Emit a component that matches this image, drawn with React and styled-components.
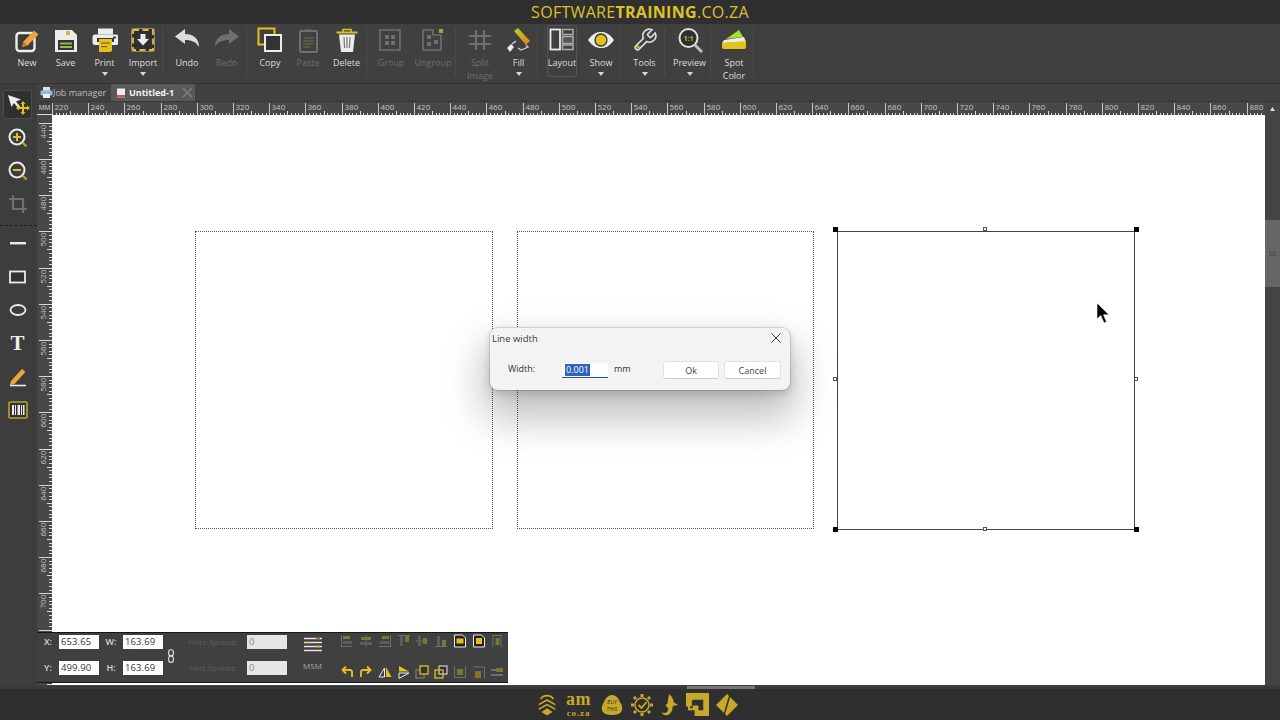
import React from 'react';
import styled, { createGlobalStyle } from 'styled-components';

const Global = createGlobalStyle`
  html, body { margin: 0; padding: 0; background: #2f2f2f; overflow: hidden; }
  * { box-sizing: border-box; }
`;

const Page = styled.div`
  width: 1280px; height: 720px; display: flex; flex-direction: column;
  font-family: "Open Sans", "Noto Sans", sans-serif; background: #2f2f2f; overflow: hidden;
`;
const TitleBar = styled.header`
  height: 24px; flex: none; background: #2f2f2f; display: flex; align-items: center; justify-content: center;
  color: #dcc22a; font-size: 16px; line-height: 24px; letter-spacing: .3px;
  b { font-weight: 700; }
`;
const Ribbon = styled.nav`
  height: 59px; flex: none; background: #404040; display: flex; padding-left: 8px; align-items: stretch;
`;
const RibbonItem = styled.div`
  width: ${p => p.$w}px; flex: none; display: flex; flex-direction: column; align-items: center;
  margin-left: ${p => p.$ml || 0}px;
  border: ${p => (p.$boxed ? '1px solid #565656' : 'none')};
  border-radius: 3px;
  height: ${p => (p.$boxed ? '52px' : 'auto')};
  padding-top: ${p => (p.$boxed ? '1px' : '3px')};
  margin-top: ${p => (p.$boxed ? '1px' : '0')};
`;
const RibbonIcon = styled.div`
  width: 28px; height: 26px; display: flex; align-items: center; justify-content: center;
`;
const RibbonLabel = styled.span`
  margin-top: 3px; font-size: 9px; line-height: 13px; text-align: center; white-space: pre-line;
  color: ${p => (p.$off ? '#6e6e6e' : '#dedede')};
`;
const Caret = styled.i`
  margin-top: 3px; width: 0; height: 0; display: block;
  border-left: 3.5px solid transparent; border-right: 3.5px solid transparent; border-top: 4px solid #d8d8d8;
`;
const Sep = styled.div`
  width: 5px; flex: none; margin: 3px 0 7px; border-left: 1px solid #4b4b4b;
`;
const Body = styled.div`
  flex: 1; min-height: 0; display: flex; background: #404040;
`;
const LeftBar = styled.aside`
  width: 37px; flex: none; background: #3d3d3d; padding: 3.5px 0 0 3px; border-top: 1px solid #353535;
  display: flex; flex-direction: column;
`;
const ToolButton = styled.div`
  width: 29px; height: 29px; flex: none; margin: 2.2px 0; display: flex; align-items: center; justify-content: center;
  border-radius: 2px;
  background: ${p => (p.$active ? '#303030' : 'transparent')};
  border: 1px solid ${p => (p.$active ? '#4c4c4c' : 'transparent')};
`;
const ToolGlyph = styled.span`
  font: 700 21px "Liberation Serif", serif; color: #ececec;
`;
const ToolDivider = styled.div`
  height: 1px; flex: none; margin: 4px 0 .8px -3px; width: 37px; border-top: 1px dashed #1e1e1e;
`;
const Workspace = styled.main`
  flex: 1; min-width: 0; display: flex; flex-direction: column;
`;
const TabRow = styled.div`
  height: 19px; flex: none; background: #414141; display: flex; align-items: stretch; border-top: 1px solid #353535;
  padding-left: 3px; border-bottom: 1px solid #383838;
`;
const Tab = styled.div`
  display: flex; align-items: center; font-size: 9px;
  width: ${p => p.$w}px; padding-left: ${p => p.$pl || 0}px;
  color: ${p => (p.$active ? '#f4f4f4' : '#bdbdbd')};
  font-weight: ${p => (p.$active ? 700 : 400)};
  background: ${p => (p.$active ? '#595959' : 'transparent')};
`;
const TabDoc = styled.svg`
  margin-right: 3px; flex: none;
`;
const TabClose = styled.svg`
  margin-left: 8px; flex: none;
`;
const RulerRow = styled.div`
  height: 13px; flex: none; display: flex; background: #484848;
`;
const RulerUnit = styled.div`
  width: 15px; flex: none; font-size: 6.5px; line-height: 11px; color: #ddd; text-align: center; border-bottom: 1px solid #ddd;
  height: 13px; background: #3f3f3f;
`;
const HRulerSvg = styled.svg`
  display: block; flex: none;
  text { font: 8px "Open Sans", sans-serif; fill: #c4c4c4; }
`;
const RulerEnd = styled.div`
  width: 15px; flex: none; background: #444; display: flex; align-items: center; justify-content: center;
`;
const StageRow = styled.div`
  flex: 1; min-height: 0; display: flex; position: relative; margin-bottom: 1px;
`;
const VRuler = styled.svg`
  display: block; width: 15px; height: 570px; flex: none; background: #484848;
  text { font: 8px "Open Sans", sans-serif; fill: #c4c4c4; }
`;
const Canvas = styled.div`
  flex: 1; position: relative; background: #fff; overflow: hidden;
`;
const Marquee = styled.div`
  position: absolute; left: ${p => p.$x}px; top: ${p => p.$y}px; width: ${p => p.$w}px; height: ${p => p.$h}px;
  border: 1px ${p => (p.$solid ? 'solid #444' : 'dotted #5a5a5a')};
`;
const Handle = styled.div`
  position: absolute; left: ${p => p.$x - 2}px; top: ${p => p.$y - 2}px; width: ${p => (p.$on ? 5 : 4)}px; height: ${p => (p.$on ? 5 : 4)}px;
  background: ${p => (p.$on ? '#000' : '#fff')}; border: 1px solid ${p => (p.$on ? '#000' : '#555')};
`;
const Pointer = styled.svg`
  position: absolute; left: 1045px; top: 188px;
`;
const Scrollbar = styled.div`
  width: 15px; flex: none; background: #444; padding-top: 105px;
`;
const ScrollThumb = styled.div`
  height: 67px; background: #666; display: flex; flex-direction: column; align-items: center; justify-content: center; gap: 1px;
  i { display: block; width: 7px; height: 1px; background: #4d4d4d; }
`;
const Dialog = styled.div`
  position: absolute; left: 438px; top: 213px; width: 300px; height: 62px; background: #f3f3f3; border-radius: 8px;
  box-shadow: 0 0 0 1px rgba(0,0,0,.12), 0 4px 10px rgba(0,0,0,.16), 0 22px 42px 6px rgba(0,0,0,.26);
  color: #333; font-size: 9px;
  display: flex; flex-direction: column;
`;
const DialogHead = styled.div`
  height: 20px; display: flex; align-items: center; justify-content: space-between; padding: 0 9px 0 2px; font-size: 9.5px; color: #3a3a3a;
`;
const DialogBody = styled.div`
  display: flex; align-items: center; padding-left: 18px; margin-top: 13px; height: 18px;
`;
const DialogLabel = styled.span`
  width: 54px; flex: none; margin-top: -3px;
`;
const WidthInput = styled.div`
  width: 46px; height: 15px; background: #fff; border-bottom: 1px solid #1d4f9c; padding: 1px 0 0 3px; line-height: 12px; flex: none;
  span { background: #2c63bd; color: #fff; display: inline-block; padding: 0 1px; }
`;
const UnitLabel = styled.span`
  margin-left: 6px; width: 49px; flex: none; margin-top: -3px;
`;
const DialogButton = styled.div`
  width: ${p => p.$w}px; height: 18px; background: #fff; border: 1px solid #e2e2e2; border-bottom-color: #ccc; border-radius: 3px;
  display: flex; align-items: center; justify-content: center; margin-left: ${p => p.$ml || 0}px; flex: none; font-size: 9px; color: #444;
`;
const PropPanel = styled.section`
  position: absolute; left: 0; bottom: 2px; width: 471px; height: 51px; background: #404040;
  border-top: 1px solid #161616; border-bottom: 1px solid #161616; display: flex; align-items: flex-start; color: #ddd;
`;
const FieldGrid = styled.div`
  display: grid; grid-template-columns: ${p => p.$cols}; grid-auto-rows: 14px; row-gap: 12px; padding-top: 2px; align-items: center;
  flex: none;
`;
const FieldLabel = styled.span`
  font-size: ${p => (p.$off ? 8 : 9)}px; line-height: 14px; text-align: center; white-space: nowrap;
  color: ${p => (p.$off ? '#5f5f5f' : '#d8d8d8')};
  font-weight: ${p => (p.$off ? 400 : 600)};
`;
const FieldValue = styled.div`
  height: 14px; font-size: 9.5px; line-height: 13px; padding-left: 2px; letter-spacing: .1px;
  background: ${p => (p.$off ? '#e6e6e6' : '#fff')}; color: ${p => (p.$off ? '#8a8a8a' : '#333')};
`;
const ChainWrap = styled.div`
  width: 16px; height: 46px; flex: none; display: flex; align-items: center; justify-content: center;
`;
const MsmBlock = styled.div`
  width: 51px; flex: none; display: flex; flex-direction: column; align-items: center; padding-top: 4px; font-size: 8px; color: #a8a8a8; line-height: 11px;
  svg { margin-bottom: 7px; }
`;
const MiniGrid = styled.div`
  display: grid; grid-template-columns: repeat(9, 18.75px); grid-auto-rows: 14px; row-gap: 17px; padding-top: 1px; justify-items: center; align-items: center; flex: none;
`;
const BottomBar = styled.footer`
  height: 34px; flex: none; background: #2f2f2f; display: flex; flex-direction: column;
`;
const HTrack = styled.div`
  height: 3px; flex: none; background: #3a3a3a; padding-left: 687px;
`;
const HThumb = styled.div`
  width: 68px; height: 3px; background: #777;
`;
const LogoRow = styled.div`
  flex: 1; display: flex; align-items: center; justify-content: center; padding: 0 6px 0 0; gap: 6px; color: #c7a82b;
`;
const AmLogo = styled.div`
  width: 30px; font-family: "Liberation Serif", serif; font-weight: 700; text-align: center; color: #c7a82b;
  font-size: 18px; line-height: 20px; letter-spacing: .4px; margin-top: -3px;
  small { display: block; font-size: 9px; line-height: 9px; letter-spacing: .9px; }
`;

const Y = '#e3c01e';
const W = '#ececec';
const D = '#6f6f6f';

const Svg = ({ s = 26, vb, children }) => (
  <svg width={s} height={s} viewBox={vb || `0 0 ${s} ${s}`} fill="none">{children}</svg>
);

const ribbon = [
  { l: 'New', w: 38, i: <Svg><rect x="2.5" y="6" width="18" height="18" rx="3" stroke={W} strokeWidth="2.4" fill="#3a3a3a" /><path d="M8 20l1.5-5.5L20 3.5l4.5 4L13.5 18.5z" fill="#eea43a" /><path d="M8 20l1.5-5.500 4 4z" fill="#c9792a" /></Svg> },
  { l: 'Save', w: 39, i: <Svg><path d="M2 3h17l5 5v17H2z" fill={W} /><rect x="13" y="4" width="4" height="4" fill="#d6b23a" /><rect x="5" y="13" width="16" height="10" fill="#343434" /><rect x="7" y="15.5" width="12" height="2" fill="#8fbe48" /><rect x="7" y="19" width="12" height="2" fill="#8fbe48" /></Svg> },
  { l: 'Print', w: 39, c: 1, i: <Svg><rect x="6" y="1.5" width="15" height="6" fill={W} /><rect x="0.5" y="7.5" width="26" height="10.5" rx="2.5" fill={W} /><rect x="21" y="9.5" width="3" height="2" fill="#444" /><rect x="5" y="11" width="17" height="4" fill="#343434" /><path d="M7 12h13v12l-2 1H7z" fill={Y} /><rect x="9" y="15.5" width="9" height="1.2" fill="#7a6510" /><rect x="9" y="19" width="6" height="1.2" fill="#7a6510" /></Svg> },
  { l: 'Import', w: 38, c: 1, i: <Svg><rect x="1.5" y="1.5" width="23" height="23" rx="2" fill="#2f2f2f" stroke="#8a8a8a" /><rect x="3" y="3" width="20" height="20" stroke={Y} strokeWidth="1.8" strokeDasharray="6 3.5" /><path d="M10.5 7h5v5h3.5L13 18.5 7 12h3.5z" fill={W} /></Svg> },
  { sep: 1 },
  { l: 'Undo', w: 40, i: <Svg><path d="M1 9.5L11 2v5c8 0 14 4 14 13-3-5-7-7-14-7v4z" fill="#dcdcdc" /></Svg> },
  { l: 'Redo', w: 39, off: 1, i: <Svg><path d="M25 9.5L15 2v5C7 7 1 11 1 20c3-5 7-7 14-7v4z" fill={D} /></Svg> },
  { sep: 1 },
  { l: 'Copy', w: 38, i: <Svg><rect x="1.5" y="1.5" width="16" height="16" stroke={Y} strokeWidth="2" /><rect x="8" y="8" width="16" height="16" fill="#333" stroke={W} strokeWidth="2" /></Svg> },
  { l: 'Paste', w: 38, off: 1, i: <Svg><rect x="5" y="4" width="17" height="21" rx="1" stroke={D} strokeWidth="2" /><path d="M10 5V2.5h3.5V1l1 1.5H17V5z" fill={D} /><path d="M8.5 11h10M8.5 14h10M8.5 17h10M8.5 20h7" stroke="#7c7242" /></Svg> },
  { l: 'Delete', w: 39, i: <Svg><path d="M2.5 5.5h21" stroke={Y} strokeWidth="2" /><path d="M9 5V2.5h8V5" stroke={Y} strokeWidth="1.6" /><path d="M5 7.5h16l-2 17.5H7z" fill={W} /><path d="M10 10l.6 11M13 10v11M16 10l-.6 11" stroke="#777" strokeWidth="1.2" /></Svg> },
  { sep: 1 },
  { l: 'Group', w: 40, off: 1, i: <Svg><rect x="2" y="3" width="20" height="20" stroke={D} strokeWidth="1.6" /><path d="M7 8h4v4H7zM13 8h4v4h-4zM7 14h4v4H7zM13 14h4v4h-4z" fill={D} /></Svg> },
  { l: 'Ungroup', w: 44, off: 1, i: <Svg><path d="M3 3h10v5h8v15H3z" stroke={D} strokeWidth="1.6" /><path d="M7 8h4v4H7zM7 15h4v4H7zM14 13h4v4h-4z" fill={D} /><rect x="19" y="2" width="4" height="4" fill="#a8a33a" /></Svg> },
  { sep: 1 },
  { l: 'Split\nImage', w: 40, off: 1, i: <Svg><path d="M9 3v20M17 3v20M2 9h22M2 17h22" stroke={D} strokeWidth="2.2" /></Svg> },
  { l: 'Fill', w: 37, c: 1, i: <Svg><defs><linearGradient id="rg" x1="0" y1="0" x2="1" y2="1"><stop offset="0" stopColor="#9fdc2c" /><stop offset="1" stopColor="#f07a14" /></linearGradient></defs><path d="M8 4l4-3 12 13-4 4z" fill="url(#rg)" /><path d="M20 18l2 2-7 3-3-2" stroke="#ccc" strokeWidth="1.3" /><path d="M1 21l4-4 3 3-4 5z" fill={W} /><path d="M6 17l4-3" stroke="#ddd" strokeWidth="1.2" /></Svg> },
  { sep: 1 },
  { l: 'Layout', w: 30, ml: 5, boxed: 1, i: <Svg><rect x="1.5" y="2.5" width="9.5" height="20" stroke={W} strokeWidth="1.8" /><rect x="13.5" y="2.5" width="10.5" height="5" stroke="#aaa" strokeWidth="1.5" /><rect x="13.5" y="9.5" width="10.5" height="7" fill="#555" stroke="#aaa" strokeWidth="1.5" /><rect x="13.5" y="18" width="10.5" height="4.5" stroke="#aaa" strokeWidth="1.5" /></Svg> },
  { l: 'Show', w: 38, ml: 5, c: 1, i: <Svg><path d="M0 13C5 6 9 5 13 5s8 1 13 8c-5 7-9 8-13 8s-8-1-13-8z" fill={W} /><circle cx="13" cy="13" r="6" fill={Y} stroke="#333" strokeWidth="1.3" /></Svg> },
  { sep: 1 },
  { l: 'Tools', w: 39, c: 1, i: <svg width="26" height="26" viewBox="0 0 24 24" fill="none"><path d="M14.7 6.3a1 1 0 0 0 0 1.4l1.6 1.6a1 1 0 0 0 1.4 0l3.77-3.77a6 6 0 0 1-7.94 7.94l-6.91 6.91a2.12 2.12 0 0 1-3-3l6.91-6.91a6 6 0 0 1 7.94-7.94l-3.76 3.76z" stroke="#dcdcdc" strokeWidth="1.5" /><circle cx="5.6" cy="18.5" r="1.6" fill="#c9a92a" /></svg> },
  { sep: 1 },
  { l: 'Preview', w: 41, c: 1, i: <Svg><circle cx="11.5" cy="11" r="9" fill="#2f2f2f" stroke="#e2e2e2" strokeWidth="2" /><path d="M18 18l7 7" stroke="#bdbdbd" strokeWidth="3" /><text x="11.5" y="13.5" textAnchor="middle" fontSize="7" fontWeight="700" fill="#c9b03a" fontFamily="Open Sans">1:1</text></Svg> },
  { sep: 1 },
  { l: 'Spot\nColor', w: 38, i: <Svg><path d="M5 12L18 3l4 7z" fill="#a6e02c" /><path d="M1 16l2-3 20-3 2 5z" fill={W} /><path d="M1 16l24-2v6a2 2 0 0 1-2 2H3a2 2 0 0 1-2-2z" fill="#e6c21e" /></Svg> },
  { sep: 1 },
];

const tools = [
  { a: 1, i: <Svg s={24}><path d="M2 3l13 4.500-5 2 5 6-2 1.500-5-6-2.500 4z" fill={W} /><path d="M17 9l2.500 3h-1.500v3h3v-1.500l3 2.500-3 2.500V17h-3v3h1.500L17 23l-2.500-3H16v-3h-3v1.500L10 16l3-2.500V15h3v-3h-1.500z" fill={Y} /></Svg> },
  { i: <Svg s={22}><circle cx="10" cy="10" r="7.500" stroke={W} strokeWidth="2" /><path d="M15.500 15.500l4 4" stroke="#b9a02a" strokeWidth="2.400" /><path d="M6 10h8M10 6v8" stroke={Y} strokeWidth="2" /></Svg> },
  { i: <Svg s={22}><circle cx="10" cy="10" r="7.500" stroke={W} strokeWidth="2" /><path d="M15.500 15.500l4 4" stroke="#b9a02a" strokeWidth="2.400" /><path d="M6 10h8" stroke={Y} strokeWidth="2" /></Svg> },
  { i: <Svg s={22}><path d="M6 2v14h14M2 6h14v14" stroke={D} strokeWidth="2.200" /></Svg> },
  { div: 1 },
  { i: <Svg s={22}><rect x="3" y="10" width="16" height="2.400" fill={W} /></Svg> },
  { i: <Svg s={22}><rect x="3" y="5.500" width="15" height="11" fill="#333" stroke={W} strokeWidth="1.800" /></Svg> },
  { i: <Svg s={22}><ellipse cx="11" cy="11" rx="7.500" ry="5" stroke={W} strokeWidth="1.800" /></Svg> },
  { t: 1 },
  { i: <Svg s={22}><path d="M4 15L15 3l3.500 3L7.500 18l-4.500 1z" fill="#eea43a" /><path d="M3 19.500h16" stroke={W} strokeWidth="1.600" /></Svg> },
  { i: <Svg s={22}><rect x="2" y="3" width="18" height="16" rx="1" fill="#333" stroke="#b9a02a" strokeWidth="1.600" /><path d="M5 6h2v10H5zM8 6h1v10H8zM10.500 6h2.500v10h-2.500zM14 6h1v10h-1zM16 6h1.500v10H16z" fill={W} /></Svg> },
];

const AlignIcon = ({ v }) => {
  const g = '#6f6f6f', o = '#7d7530';
  const map = {
    a: <><path d="M1.500 1v12M1.500 12.500h11" stroke={g} /><rect x="3" y="2" width="7" height="3" fill={o} /><rect x="3" y="7" width="9" height="3" fill="#5c5c5c" /></>,
    b: <><path d="M7 1v12" stroke={g} /><rect x="2" y="3" width="10" height="3" fill={o} /><rect x="1" y="8" width="12" height="3" fill="#5c5c5c" /></>,
    c: <><path d="M12.500 1v12M1 12.500h11" stroke={g} /><rect x="4" y="2" width="7" height="3" fill={o} /><rect x="2" y="7" width="9" height="3" fill="#5c5c5c" /></>,
    d: <><path d="M1 1.500h12" stroke={g} /><rect x="3" y="2" width="3" height="10" fill="#5c5c5c" /><rect x="8" y="2" width="4" height="6" fill={o} /></>,
    e: <><path d="M1 7h12" stroke={g} /><rect x="3" y="2" width="3" height="10" fill="#5c5c5c" /><rect x="8" y="4" width="4" height="6" fill={o} /></>,
    f: <><path d="M1 12.500h12" stroke={g} /><rect x="3" y="2" width="3" height="10" fill="#5c5c5c" /><rect x="8" y="6" width="4" height="6" fill={o} /></>,
    g: <><path d="M1.500 1h8l3 3v9h-11z" fill="#222" stroke={W} /><rect x="3.500" y="4.500" width="7" height="5" fill={Y} /></>,
    h: <><path d="M1.500 1h8l3 3v9h-11z" fill="#222" stroke={W} /><rect x="4" y="4" width="6" height="6" fill={Y} /></>,
    i: <><path d="M2 1.500h10M3 2v11M11 2v11" stroke={g} /><rect x="5.500" y="4" width="4" height="7" fill={o} /></>,
    j: <path d="M12 12V7a2 2 0 0 0-2-2H3M6 1.500L2.500 5 6 8.500" stroke={Y} strokeWidth="1.900" />,
    k: <path d="M2 12V7a2 2 0 0 1 2-2h7M8 1.500L11.500 5 8 8.500" stroke={Y} strokeWidth="1.900" />,
    l: <><path d="M6.500 3v9H1z" stroke={W} /><path d="M8 2l5.500 10H8z" fill={Y} /></>,
    m: <><path d="M2 1l10 5.500H2z" fill={Y} /><path d="M2 8h10L2 13.500z" stroke={W} /></>,
    n: <><rect x="1" y="5" width="8" height="8" stroke="#888" /><rect x="5" y="1" width="8" height="8" fill="#333" stroke={Y} strokeWidth="1.300" /></>,
    o: <><rect x="5" y="1" width="8" height="8" fill="#333" stroke={W} /><rect x="1" y="5" width="8" height="8" fill="none" stroke={Y} strokeWidth="1.300" /></>,
    p: <><path d="M1.500 1v12M12.500 1v12M1 12.500h12" stroke={g} /><rect x="4" y="4" width="6" height="6" fill={o} /></>,
    q: <><path d="M1.500 2h11M12.500 2v11" stroke={g} /><rect x="3" y="6" width="6" height="7" fill={o} /></>,
    r: <><path d="M1 5h5M1 10h12" stroke={g} strokeWidth="2" /><rect x="6" y="3" width="7" height="4" fill={o} /></>,
  };
  return <svg width="14" height="14" viewBox="0 0 14 14" fill="none">{map[v]}</svg>;
};

const STEP = 36.2;
const HRuler = () => {
  const marks = [];
  for (let i = 0; i * STEP / 10 < 1213; i++) {
    const x = Math.round(i * STEP / 10) + 0.5;
    if (i % 10 === 0) continue;
    const len = i % 5 === 0 ? 4 : 2;
    marks.push(<path key={i} d={`M${x} ${13 - len}V13`} stroke="#d8d8d8" strokeWidth="1" />);
  }
  const labels = [];
  for (let n = 0; n <= 33; n++) {
    const x = Math.round(n * STEP) + 0.5;
    labels.push(<path key={'m' + n} d={`M${x} 1V13`} stroke="#c8c8c8" />);
    labels.push(<text key={'t' + n} x={x + 2} y="8">{220 + n * 20}</text>);
  }
  return <HRulerSvg width="1213" height="13" viewBox="0 0 1213 13">{marks}{labels}</HRulerSvg>;
};
const VerticalRuler = () => {
  const out = [];
  for (let i = 0; i * STEP / 10 < 570; i++) {
    const y = Math.round(7.7 + i * STEP / 10) + 0.5;
    const major = i % 10 === 0;
    const len = major ? 13 : i % 5 === 0 ? 5 : 3;
    out.push(<path key={i} d={`M${15 - len} ${y}H15`} stroke="#d8d8d8" />);
    if (major) {
      const ty = y + 15;
      out.push(<text key={'t' + i} x="9" y={ty} transform={`rotate(-90 9 ${ty})`}>{440 + (i / 10) * 20}</text>);
    }
  }
  return <VRuler viewBox="0 0 15 570">{out}</VRuler>;
};

const miniRows = ['a', 'b', 'c', 'd', 'e', 'f', 'g', 'h', 'i', 'j', 'k', 'l', 'm', 'n', 'o', 'p', 'q', 'r'];

export default function App() {
  return (
    <Page>
      <Global />
      <TitleBar><span>SOFTWARE<b>TRAINING</b>.CO.ZA</span></TitleBar>
      <Ribbon>
        {ribbon.map((r, k) =>
          r.sep ? <Sep key={k} /> : (
            <RibbonItem key={k} $w={r.w} $ml={r.ml} $boxed={r.boxed}>
              <RibbonIcon>{r.i}</RibbonIcon>
              <RibbonLabel $off={r.off}>{r.l}</RibbonLabel>
              {r.c ? <Caret /> : null}
            </RibbonItem>
          ))}
      </Ribbon>
      <Body>
        <LeftBar>
          {tools.map((t, k) => {
            if (t.div) return <ToolDivider key={k} />;
            if (t.t) return <ToolButton key={k}><ToolGlyph>T</ToolGlyph></ToolButton>;
            return <ToolButton key={k} $active={t.a}>{t.i}</ToolButton>;
          })}
        </LeftBar>
        <Workspace>
          <TabRow>
            <Tab $w={71}>
              <svg width="13" height="13" viewBox="0 0 13 13" fill="none"><rect x="3" y="1" width="7" height="4" fill="#cfe0ef" /><rect x="0.500" y="4.500" width="12" height="5" rx="1" fill="#9fb6cc" /><rect x="3" y="8" width="7" height="4" fill="#e8eef4" /></svg>
              <span>Job manager</span>
            </Tab>
            <Tab $w={84} $active $pl={5}>
              <TabDoc width="10" height="10" viewBox="0 0 10 10" fill="none"><rect x="1" y="0.500" width="8" height="9" fill="#eee" /><rect x="1" y="7" width="8" height="2.500" fill="#c65a4a" /></TabDoc>
              <span>Untitled-1</span>
              <TabClose width="11" height="11" viewBox="0 0 11 11"><path d="M1 1l9 9M10 1l-9 9" stroke="#858585" strokeWidth="1.100" /></TabClose>
            </Tab>
          </TabRow>
          <RulerRow>
            <RulerUnit>MM</RulerUnit>
            <HRuler />
            <RulerEnd><svg width="5" height="4" viewBox="0 0 5 4"><path d="M2.500 0L5 4H0z" fill="#ddd" /></svg></RulerEnd>
          </RulerRow>
          <StageRow>
            <VerticalRuler />
            <Canvas>
              <Marquee $x={143} $y={116} $w={298} $h={298} />
              <Marquee $x={465} $y={116} $w={297} $h={298} />
              <Marquee $x={785} $y={116} $w={298} $h={299} $solid />
              <Handle $on $x={783} $y={114} />
              <Handle $on $x={1084} $y={114} />
              <Handle $on $x={783} $y={414} />
              <Handle $on $x={1084} $y={414} />
              <Handle $x={933} $y={114} />
              <Handle $x={933} $y={414} />
              <Handle $x={783} $y={264} />
              <Handle $x={1084} $y={264} />
              <Pointer width="13" height="21" viewBox="0 0 13 21"><path d="M0 0v16l3.800-3.500L7 20l2.500-1-3-7.200H12z" fill="#000" stroke="#fff" strokeWidth=".6" /></Pointer>
              <Dialog>
                <DialogHead>
                  <span>Line width</span>
                  <svg width="10" height="10" viewBox="0 0 10 10"><path d="M.5.500l9 9M9.500.500l-9 9" stroke="#333" strokeWidth="1" /></svg>
                </DialogHead>
                <DialogBody>
                  <DialogLabel>Width:</DialogLabel>
                  <WidthInput><span>0.001</span></WidthInput>
                  <UnitLabel>mm</UnitLabel>
                  <DialogButton $w={56}>Ok</DialogButton>
                  <DialogButton $w={57} $ml={5}>Cancel</DialogButton>
                </DialogBody>
              </Dialog>
            </Canvas>
            <Scrollbar><ScrollThumb><i /><i /><i /></ScrollThumb></Scrollbar>
            <PropPanel>
              <FieldGrid $cols="22px 40px 24px 40px">
                <FieldLabel>X:</FieldLabel><FieldValue>653.65</FieldValue>
                <FieldLabel>W:</FieldLabel><FieldValue>163.69</FieldValue>
                <FieldLabel>Y:</FieldLabel><FieldValue>499.90</FieldValue>
                <FieldLabel>H:</FieldLabel><FieldValue>163.69</FieldValue>
              </FieldGrid>
              <ChainWrap>
                <svg width="6" height="14" viewBox="0 0 6 14" fill="none"><rect x=".7" y=".7" width="4.600" height="6" rx="2" stroke={W} strokeWidth="1.100" /><rect x=".7" y="7.300" width="4.600" height="6" rx="2" stroke={W} strokeWidth="1.100" /></svg>
              </ChainWrap>
              <FieldGrid $cols="68px 40px">
                <FieldLabel $off>Horz-Spread:</FieldLabel><FieldValue $off>0</FieldValue>
                <FieldLabel $off>Vert-Spread:</FieldLabel><FieldValue $off>0</FieldValue>
              </FieldGrid>
              <MsmBlock>
                <svg width="18" height="16" viewBox="0 0 18 16" fill="none"><path d="M0 1.500h18M0 5.500h18M0 9.500h18M0 13.500h18" stroke="#e4e4e4" strokeWidth="1.500" /><path d="M2 5.500h3M12 9.500h4" stroke={Y} strokeWidth="1.500" /><path d="M12 1.500h4" stroke="#a7692a" strokeWidth="1.500" /></svg>
                <span>MSM</span>
              </MsmBlock>
              <MiniGrid>
                {miniRows.map(v => <AlignIcon key={v} v={v} />)}
              </MiniGrid>
            </PropPanel>
          </StageRow>
        </Workspace>
      </Body>
      <BottomBar>
        <HTrack><HThumb /></HTrack>
        <LogoRow>
          <svg width="22" height="24" viewBox="0 0 24 25" fill="none"><path d="M5 6c3-5 11-5 14 0" stroke="currentColor" strokeWidth="2" /><path d="M3 11l9-5 9 5v2l-9-5-9 5zM3 16l9-5 9 5v2l-9-5-9 5zM6 20l6-4 6 4-6 4z" fill="currentColor" /></svg>
          <AmLogo>am<small>co.za</small></AmLogo>
          <svg width="24" height="22" viewBox="0 0 26 24"><path d="M13 1c5 0 7 4 10 10 3 7 0 12-10 12S0 18 3 11C6 5 8 1 13 1z" fill="currentColor" /><text x="13" y="11" textAnchor="middle" fontSize="6" fontStyle="italic" fill="#2f2f2f" fontFamily="Open Sans">BUY</text><text x="13" y="19" textAnchor="middle" fontSize="6" fontStyle="italic" fill="#2f2f2f" fontFamily="Open Sans">THIS</text></svg>
          <svg width="24" height="24" viewBox="0 0 24 24" fill="none" stroke="currentColor"><circle cx="12" cy="12" r="7" strokeWidth="1.500" /><path d="M8.500 12l3 3 5-6" strokeWidth="1.800" /><path d="M12 1v3M12 20v3M1 12h3M20 12h3M4 4l2 2M18 18l2 2M20 4l-2 2M6 18l-2 2" strokeWidth="3" /></svg>
          <svg width="20" height="24" viewBox="0 0 22 24"><path d="M10 0c3 2 5 6 5 9l5 3-6 1c0 5-2 8-5 10-4 1-7-1-7-3 3 2 7 0 7-3 0-2-2-3-3-5l2-1 1-6z" fill="currentColor" /></svg>
          <svg width="23" height="23" viewBox="0 0 24 24"><path d="M0 0h24v24H9v-6H2V10h13v6h-3" fill="currentColor" /><path d="M7 7h11v11h-5v-5H7v3H4v-2z" fill="#2f2f2f" /><path d="M0 0h24v6H6v8H0z" fill="currentColor" /></svg>
          <svg width="24" height="24" viewBox="0 0 24 24"><path d="M12 1l11 11-11 11L1 12z" fill="currentColor" /><path d="M15 2L9 22" stroke="#2f2f2f" strokeWidth="1.500" /></svg>
        </LogoRow>
      </BottomBar>
    </Page>
  );
}
